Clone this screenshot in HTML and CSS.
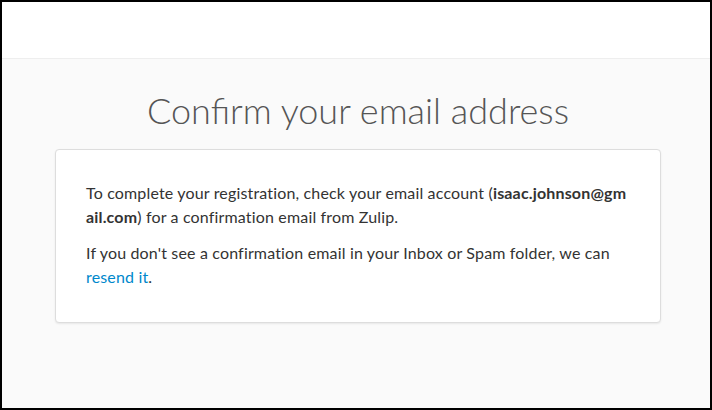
FILE: index.html
```html
<!DOCTYPE html>
<html>
<head>
<meta charset="utf-8">
<link rel="stylesheet" href="styles.css">
</head>
<body>
<div class="frame">
  <header class="topbar"></header>
  <main class="content">
    <h1 class="title">Confirm your email address</h1>
    <div class="card">
      <p class="para">To complete your registration, check your email account (<strong class="email">isaac.johnson@gmail.com</strong>) for a confirmation email from Zulip.</p>
      <p class="para">If you don't see a confirmation email in your Inbox or Spam folder, we can <a class="link" href="#">resend it</a>.</p>
    </div>
  </main>
</div>
</body>
</html>
```

FILE: styles.css
```css
html, body {
  margin: 0;
  padding: 0;
}
.frame {
  box-sizing: border-box;
  width: 712px;
  height: 410px;
  border: 2px solid #000;
  background: #fafafa;
  font-family: "Lato", "Open Sans", sans-serif;
  overflow: hidden;
}
.topbar {
  height: 56px;
  background: #fff;
  border-bottom: 1px solid #eee;
}
.content {
  padding-top: 26px;
}
.title {
  margin: 0 0 14px 0;
  text-align: center;
  font-weight: 300;
  font-size: 36px;
  line-height: 50px;
  color: #555;
  padding-left: 4px;
}
.card {
  margin: 0 49px 0 53px;
  background: #fff;
  border: 1px solid #ddd;
  border-radius: 4px;
  box-shadow: 0 1px 2px rgba(0,0,0,0.08);
  padding: 31px 30px 33px 30px;
  color: #333;
  font-size: 16px;
  line-height: 24px;
  letter-spacing: 0.16px;
}
.para {
  margin: 0 0 12px 0;
}
.para:last-child {
  margin-bottom: 0;
}
.email {
  word-break: break-all;
  font-weight: 700;
}
.link {
  color: #0088cc;
  text-decoration: none;
}
```
